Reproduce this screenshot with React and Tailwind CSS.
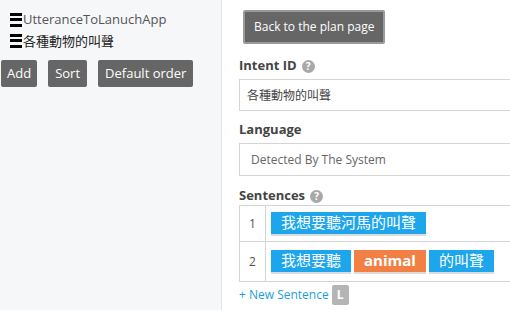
import React from "react";

const Burger = () => (
  <span className="inline-flex flex-col justify-between w-[12px] h-[14px] mr-[1px]">
    <span className="block h-[3px] bg-black" />
    <span className="block h-[3px] bg-black" />
    <span className="block h-[3px] bg-black" />
  </span>
);

const Help = () => (
  <span className="inline-flex items-center justify-center w-[13px] h-[13px] rounded-full bg-[#a8a8a8] text-white text-[10px] font-bold leading-none ml-[5px]">?</span>
);

const Chip = ({ children, orange }) => (
  <span
    className={
      (orange ? "bg-[#f28044] font-bold font-['Open_Sans',sans-serif] text-[15px]" : "bg-[#1ea6ec] text-[15px]") +
      " text-white h-[24px] px-[10px] flex items-center border-b-2 border-[#dcdcdc] leading-none"
    }
  >
    {children}
  </span>
);

export default function App() {
  return (
    <div className="w-[510px] h-[310px] flex bg-white overflow-hidden font-['Open_Sans','Noto_Sans_CJK_TC',sans-serif] text-[#333]">
      <div className="w-[222px] shrink-0 bg-[#f6f7f9] border-r border-[#e3e5e8] pt-[11px]">
        <div className="flex items-center pl-[10px] h-[17px] text-[13px] text-[#555]">
          <Burger />
          <span>UtteranceToLanuchApp</span>
        </div>
        <div className="flex items-center pl-[10px] h-[17px] mt-[4px] text-[13px] text-[#222]">
          <Burger />
          <span className="font-['Noto_Sans_CJK_TC',sans-serif]">各種動物的叫聲</span>
        </div>
        <div className="flex gap-[11px] pl-[1px] mt-[11px]">
          <button className="h-[27px] px-[6px] bg-[#666] text-white text-[13px] rounded-[2px]">Add</button>
          <button className="h-[27px] px-[7px] bg-[#666] text-white text-[13px] rounded-[2px]">Sort</button>
          <button className="h-[27px] px-[7px] bg-[#666] text-white text-[13px] rounded-[2px]">Default order</button>
        </div>
      </div>
      <div className="flex-1 pl-[17px] pt-[10px]">
        <button className="ml-[4px] h-[34px] px-[9px] bg-[#666] text-white text-[12px] border-2 border-[#9a9a9a] rounded-[2px]">
          Back to the plan page
        </button>
        <div className="mt-[13px] flex items-center text-[13px] font-bold text-[#444] h-[18px]">
          Intent ID <Help />
        </div>
        <div className="mt-[4px] h-[32px] border border-[#d4d4d4] flex items-center pl-[7px] text-[12px] text-[#444] w-[300px] font-['Noto_Sans_CJK_TC',sans-serif]">
          各種動物的叫聲
        </div>
        <div className="mt-[10px] flex items-center text-[13px] font-bold text-[#444] h-[18px]">Language</div>
        <div className="mt-[4px] h-[33px] border border-[#d4d4d4] flex items-center pl-[11px] text-[12px] text-[#666] w-[300px]">
          Detected By The System
        </div>
        <div className="mt-[11px] flex items-center text-[13px] font-bold text-[#444] h-[18px]">
          Sentences <Help />
        </div>
        <div className="w-[300px] border border-[#d4d4d4]">
          <div className="flex h-[36px] border-b border-[#d4d4d4]">
            <div className="w-[26px] border-r border-[#d4d4d4] flex items-center justify-center text-[12px] text-[#555]">1</div>
            <div className="flex items-center pl-[5px] gap-[3px]">
              <Chip>我想要聽河馬的叫聲</Chip>
            </div>
          </div>
          <div className="flex h-[39px]">
            <div className="w-[26px] border-r border-[#d4d4d4] flex items-center justify-center text-[12px] text-[#555]">2</div>
            <div className="flex items-center pl-[5px] gap-[3px]">
              <Chip>我想要聽</Chip>
              <Chip orange>animal</Chip>
              <Chip>的叫聲</Chip>
            </div>
          </div>
        </div>
        <div className="mt-[3px] flex items-center text-[12px] text-[#1d9fd6]">
          <span>+ New Sentence</span>
          <span className="ml-[3px] w-[17px] h-[20px] bg-[#b5b5b5] text-white flex items-center justify-center rounded-[2px] text-[12px] font-bold">L</span>
        </div>
      </div>
    </div>
  );
}
